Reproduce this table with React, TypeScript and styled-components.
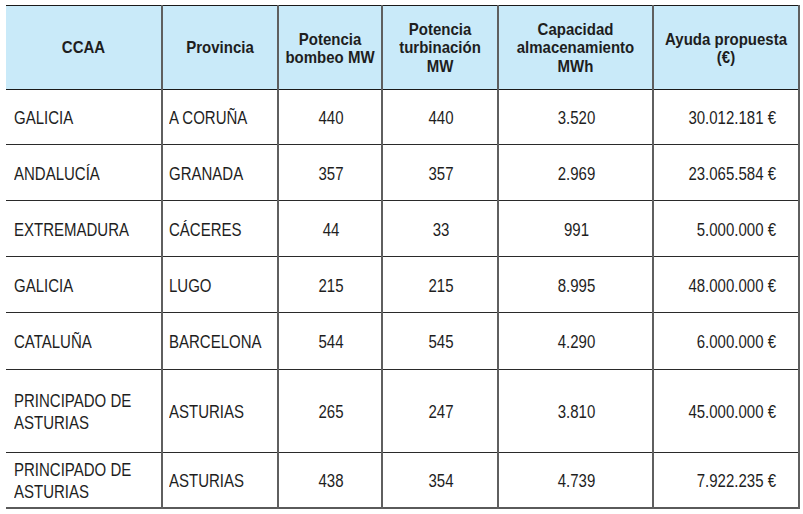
import styled, { createGlobalStyle } from 'styled-components';

type Row = {
  ccaa: string[]
  provincia: string
  bombeo: string
  turbinacion: string
  capacidad: string
  ayuda: string
  height: number
}

const rows: Row[] = [
  { ccaa: ['GALICIA'], provincia: 'A CORUÑA', bombeo: '440', turbinacion: '440', capacidad: '3.520', ayuda: '30.012.181 €', height: 55 },
  { ccaa: ['ANDALUCÍA'], provincia: 'GRANADA', bombeo: '357', turbinacion: '357', capacidad: '2.969', ayuda: '23.065.584 €', height: 56 },
  { ccaa: ['EXTREMADURA'], provincia: 'CÁCERES', bombeo: '44', turbinacion: '33', capacidad: '991', ayuda: '5.000.000 €', height: 56 },
  { ccaa: ['GALICIA'], provincia: 'LUGO', bombeo: '215', turbinacion: '215', capacidad: '8.995', ayuda: '48.000.000 €', height: 56 },
  { ccaa: ['CATALUÑA'], provincia: 'BARCELONA', bombeo: '544', turbinacion: '545', capacidad: '4.290', ayuda: '6.000.000 €', height: 57 },
  { ccaa: ['PRINCIPADO DE', 'ASTURIAS'], provincia: 'ASTURIAS', bombeo: '265', turbinacion: '247', capacidad: '3.810', ayuda: '45.000.000 €', height: 83 },
  { ccaa: ['PRINCIPADO DE', 'ASTURIAS'], provincia: 'ASTURIAS', bombeo: '438', turbinacion: '354', capacidad: '4.739', ayuda: '7.922.235 €', height: 55 },
];

const headers = [
  ['CCAA'],
  ['Provincia'],
  ['Potencia', 'bombeo MW'],
  ['Potencia', 'turbinación', 'MW'],
  ['Capacidad', 'almacenamiento', 'MWh'],
  ['Ayuda propuesta', '(€)'],
];

const widths = [156, 116, 104, 116, 155, 146];

const GlobalStyle = createGlobalStyle`
  html, body {
    margin: 0;
    padding: 0;
    background: #ffffff;
  }
`;

const Page = styled.div`
  padding: 5px 0 0 6px;
`;

const Table = styled.table`
  border-collapse: collapse;
  table-layout: fixed;
  width: 793px;
  font-family: "Liberation Sans", Arial, sans-serif;
  font-size: 15px;
  color: #1e1e1e;
  border-top: 1px solid #1a1a1a;
  border-right: 2px solid #5a5a5a;
  border-bottom: 2px solid #5a5a5a;
`;

const HeadRow = styled.tr`
  height: 84px;
  background: #c9eaf9;
`;

const Th = styled.th`
  font-weight: 700;
  text-align: center;
  vertical-align: middle;
  padding: 0 2px;
  border-bottom: 1px solid #1a1a1a;
  border-right: 2px solid #5f5f5f;
`;

const BodyRow = styled.tr<{ $h: number }>`
  height: ${p => p.$h}px;
  border-bottom: 1px solid #2a2a2a;
`;

const Td = styled.td<{ $align?: 'left' | 'center' | 'right' }>`
  text-align: ${p => p.$align || 'center'};
  vertical-align: middle;
  padding: 2px 4px 0 6px;
  border-right: 2px solid #5f5f5f;
  white-space: nowrap;

  &:first-child {
    padding-left: 8px;
  }

  &:last-child {
    padding-right: 22px;
  }
`;

/* the source is drawn a little taller than Arial, so stretch each text block */
const Tall = styled.span<{ $lh: number, $sy: number }>`
  display: inline-block;
  line-height: ${p => p.$lh}px;
  transform: scaleY(${p => p.$sy});
`;

const Lines = ({ lines, lh, sy }: { lines: string[], lh: number, sy: number }) => (
  <Tall $lh={lh} $sy={sy}>
    {lines.map((l, i) => (
      <span key={i}>
        {i > 0 && <br />}
        {l}
      </span>
    ))}
  </Tall>
);

const Cell = ({ lines }: { lines: string[] }) => <Lines lines={lines} lh={18} sy={1.2} />;

export default function App() {
  return (
    <Page>
      <GlobalStyle />
      <Table>
        <colgroup>
          {widths.map((w, i) => (
            <col key={i} style={{ width: w }} />
          ))}
        </colgroup>
        <thead>
          <HeadRow>
            {headers.map((h, i) => (
              <Th key={i}>
                <Lines lines={h} lh={17} sy={1.07} />
              </Th>
            ))}
          </HeadRow>
        </thead>
        <tbody>
          {rows.map((r, i) => (
            <BodyRow key={i} $h={r.height}>
              <Td $align="left"><Cell lines={r.ccaa} /></Td>
              <Td $align="left"><Cell lines={[r.provincia]} /></Td>
              <Td><Cell lines={[r.bombeo]} /></Td>
              <Td><Cell lines={[r.turbinacion]} /></Td>
              <Td><Cell lines={[r.capacidad]} /></Td>
              <Td $align="right"><Cell lines={[r.ayuda]} /></Td>
            </BodyRow>
          ))}
        </tbody>
      </Table>
    </Page>
  );
}
